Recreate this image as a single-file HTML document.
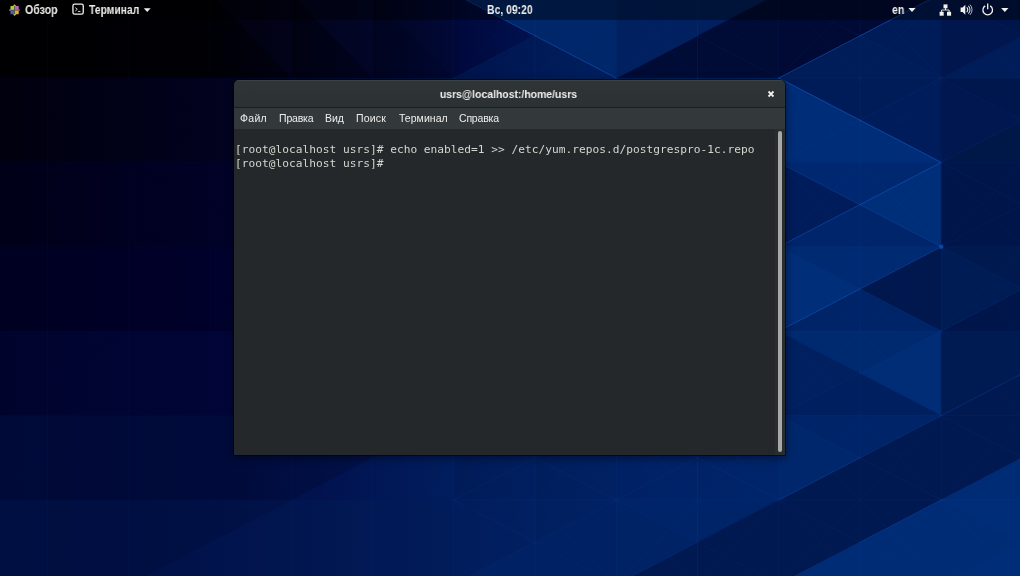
<!DOCTYPE html>
<html lang="ru">
<head>
<meta charset="utf-8">
<title>usrs@localhost:/home/usrs</title>
<style>
html,body{margin:0;padding:0;}
body{width:1020px;height:576px;overflow:hidden;background:#000a35;position:relative;font-family:"Liberation Sans","DejaVu Sans",sans-serif;}
.wall{position:absolute;left:0;top:0;display:block;}
.topbar{position:absolute;left:0;top:0;width:1020px;height:20px;background:rgba(0,0,0,0.4);color:#ececea;font-size:12px;font-weight:bold;line-height:20px;}
.topbar span{position:absolute;top:-0.3px;white-space:nowrap;will-change:transform;transform-origin:0 50%;}
.topbar svg{position:absolute;left:0;top:0;}
.win{position:absolute;left:233.5px;top:79.8px;width:551.3px;height:374.8px;border-radius:5px 5px 0 0;background:#24282a;box-shadow:0 0 0 1px rgba(0,0,0,0.5),0 2px 8px 1px rgba(0,0,0,0.45);overflow:hidden;}
.hdr{position:absolute;left:0;top:0;width:100%;height:27px;background:linear-gradient(#2f3537,#2c3133);border-bottom:1px solid #1a1d1e;box-shadow:inset 0 1px rgba(255,255,255,0.06);}
.title{position:absolute;left:-0.4px;width:551px;top:0.7px;height:27px;line-height:27px;text-align:center;color:#eeeeec;font-weight:bold;font-size:11.7px;white-space:nowrap;will-change:transform;transform:scaleX(0.893);}
.close{position:absolute;left:532px;top:9px;}
.menubar{position:absolute;left:0;top:28px;width:100%;height:21px;background:#33393b;color:#eeeeec;font-size:10.5px;line-height:21px;}
.menubar span{position:absolute;top:0.4px;white-space:nowrap;will-change:transform;}
.term{position:absolute;left:0;top:49px;width:542px;height:326px;background:#24282a;color:#d3d7cf;letter-spacing:0.01px;font-family:"DejaVu Sans Mono","Liberation Mono",monospace;font-size:11.2px;line-height:13px;white-space:pre;}
.term div{position:absolute;left:1px;will-change:transform;}
.sb{position:absolute;left:541.5px;top:49px;width:9.5px;height:326px;background:#292d2f;box-sizing:border-box;}
.thumb{position:absolute;left:544px;top:51px;width:4px;height:321px;border-radius:2px;background:#a7a9a8;}
</style>
</head>
<body>
<svg class="wall" width="1020" height="576" viewBox="0 0 1020 576"><defs><linearGradient id="r0" gradientUnits="userSpaceOnUse" x1="0" y1="0" x2="1020" y2="0"><stop offset="0.0000" stop-color="#000002"/><stop offset="0.2059" stop-color="#000006"/><stop offset="0.3647" stop-color="#00041e"/><stop offset="0.4461" stop-color="#000832"/><stop offset="0.6078" stop-color="#002468"/><stop offset="1.0000" stop-color="#00184f"/></linearGradient><linearGradient id="r1" gradientUnits="userSpaceOnUse" x1="0" y1="0" x2="1020" y2="0"><stop offset="0.0000" stop-color="#00000e"/><stop offset="0.2059" stop-color="#02021e"/><stop offset="0.7696" stop-color="#002d78"/><stop offset="1.0000" stop-color="#001a55"/></linearGradient><linearGradient id="r2" gradientUnits="userSpaceOnUse" x1="0" y1="0" x2="1020" y2="0"><stop offset="0.0000" stop-color="#000018"/><stop offset="0.2059" stop-color="#010126"/><stop offset="0.7696" stop-color="#002a72"/><stop offset="1.0000" stop-color="#00164a"/></linearGradient><linearGradient id="r3" gradientUnits="userSpaceOnUse" x1="0" y1="0" x2="1020" y2="0"><stop offset="0.0000" stop-color="#000022"/><stop offset="0.2059" stop-color="#00012b"/><stop offset="0.7696" stop-color="#002a72"/><stop offset="1.0000" stop-color="#001c58"/></linearGradient><linearGradient id="r4" gradientUnits="userSpaceOnUse" x1="0" y1="0" x2="1020" y2="0"><stop offset="0.0000" stop-color="#00042d"/><stop offset="0.2059" stop-color="#000536"/><stop offset="0.7696" stop-color="#002468"/><stop offset="1.0000" stop-color="#00174d"/></linearGradient><linearGradient id="r5" gradientUnits="userSpaceOnUse" x1="0" y1="0" x2="1020" y2="0"><stop offset="0.0000" stop-color="#000a38"/><stop offset="0.2255" stop-color="#000c3e"/><stop offset="0.3235" stop-color="#001048"/><stop offset="0.4118" stop-color="#001852"/><stop offset="0.5245" stop-color="#001e5c"/><stop offset="0.6373" stop-color="#002266"/><stop offset="0.7696" stop-color="#00256a"/><stop offset="1.0000" stop-color="#001850"/></linearGradient><linearGradient id="r6" gradientUnits="userSpaceOnUse" x1="0" y1="0" x2="1020" y2="0"><stop offset="0.0000" stop-color="#000f42"/><stop offset="0.1471" stop-color="#001046"/><stop offset="0.2941" stop-color="#00154d"/><stop offset="0.4118" stop-color="#001a55"/><stop offset="0.5245" stop-color="#001f5e"/><stop offset="0.6373" stop-color="#002367"/><stop offset="0.7647" stop-color="#00256a"/><stop offset="1.0000" stop-color="#002a72"/></linearGradient><linearGradient id="g1" gradientUnits="userSpaceOnUse" x1="454" y1="0" x2="600" y2="0"><stop offset="0" stop-color="#00134c"/><stop offset="1" stop-color="#001f5e"/></linearGradient><linearGradient id="g2" gradientUnits="userSpaceOnUse" x1="454" y1="0" x2="535" y2="0"><stop offset="0" stop-color="#00083a"/><stop offset="1" stop-color="#001250"/></linearGradient></defs><rect x="0" y="-6.40" width="1020" height="84.90" fill="url(#r0)"/><rect x="0" y="78.00" width="1020" height="84.90" fill="url(#r1)"/><rect x="0" y="162.40" width="1020" height="84.90" fill="url(#r2)"/><rect x="0" y="246.80" width="1020" height="84.90" fill="url(#r3)"/><rect x="0" y="331.20" width="1020" height="84.90" fill="url(#r4)"/><rect x="0" y="415.60" width="1020" height="84.90" fill="url(#r5)"/><rect x="0" y="500.00" width="1020" height="84.90" fill="url(#r6)"/><polygon points="210.0,-6.4 291.25,-6.4 291.25,78.0" fill="#1a2a9a" fill-opacity="0.06"/><polygon points="291.25,-6.4 372.5,-6.4 372.5,78.0" fill="#1a2a9a" fill-opacity="0.08"/><polygon points="372.5,-6.4 453.75,-6.4 453.75,78.0" fill="#1a2a9a" fill-opacity="0.04"/><polygon points="128.75,584.4 453.75,415.6 535.0,415.6 535.0,584.4" fill="#2a6aff" fill-opacity="0.02"/><polygon points="47.5,415.6 453.75,415.6 128.75,584.4 47.5,584.4" fill="#000010" fill-opacity="0.06"/><polygon points="291.25,500.0 453.75,415.6 453.75,500.0" fill="#2a6aff" fill-opacity="0.03"/><polygon points="453.75,-6.4 616.25,-6.4 535.0,35.8" fill="#00276a" stroke="#00276a" stroke-width="0.6"/><polygon points="616.25,-6.4 616.25,78.0 535.0,35.8" fill="#00276a" stroke="#00276a" stroke-width="0.6"/><polygon points="616.25,78.0 453.75,78.0 535.0,35.8" fill="url(#g1)" /><polygon points="453.75,78.0 453.75,-6.4 535.0,35.8" fill="url(#g2)" /><polygon points="616.25,-6.4 778.75,-6.4 697.5,35.8" fill="#002060" stroke="#002060" stroke-width="0.6"/><polygon points="778.75,-6.4 778.75,78.0 697.5,35.8" fill="#000c36" stroke="#000c36" stroke-width="0.6"/><polygon points="778.75,78.0 616.25,78.0 697.5,35.8" fill="#000c36" stroke="#000c36" stroke-width="0.6"/><polygon points="616.25,78.0 616.25,-6.4 697.5,35.8" fill="#002060" stroke="#002060" stroke-width="0.6"/><polygon points="778.75,-6.4 941.25,-6.4 860.0,35.8" fill="#000a35" stroke="#000a35" stroke-width="0.6"/><polygon points="941.25,-6.4 941.25,78.0 860.0,35.8" fill="#001c58" stroke="#001c58" stroke-width="0.6"/><polygon points="941.25,78.0 778.75,78.0 860.0,35.8" fill="#001d5a" stroke="#001d5a" stroke-width="0.6"/><polygon points="778.75,78.0 778.75,-6.4 860.0,35.8" fill="#000a35" stroke="#000a35" stroke-width="0.6"/><polygon points="941.25,-6.4 1103.75,-6.4 1022.5,35.8" fill="#00154a" stroke="#00154a" stroke-width="0.6"/><polygon points="1103.75,-6.4 1103.75,78.0 1022.5,35.8" fill="#00154a" stroke="#00154a" stroke-width="0.6"/><polygon points="1103.75,78.0 941.25,78.0 1022.5,35.8" fill="#001d5a" stroke="#001d5a" stroke-width="0.6"/><polygon points="941.25,78.0 941.25,-6.4 1022.5,35.8" fill="#00164c" stroke="#00164c" stroke-width="0.6"/><polygon points="778.75,78.0 941.25,78.0 860.0,120.2" fill="#001c58" stroke="#001c58" stroke-width="0.6"/><polygon points="941.25,78.0 941.25,162.4 860.0,120.2" fill="#001c5a" stroke="#001c5a" stroke-width="0.6"/><polygon points="941.25,162.4 778.75,162.4 860.0,120.2" fill="#002d78" stroke="#002d78" stroke-width="0.6"/><polygon points="778.75,162.4 778.75,78.0 860.0,120.2" fill="#002d78" stroke="#002d78" stroke-width="0.6"/><polygon points="941.25,78.0 1103.75,78.0 1022.5,120.2" fill="#00174e" stroke="#00174e" stroke-width="0.6"/><polygon points="1103.75,78.0 1103.75,162.4 1022.5,120.2" fill="#001848" stroke="#001848" stroke-width="0.6"/><polygon points="1103.75,162.4 941.25,162.4 1022.5,120.2" fill="#001848" stroke="#001848" stroke-width="0.6"/><polygon points="941.25,162.4 941.25,78.0 1022.5,120.2" fill="#00184f" stroke="#00184f" stroke-width="0.6"/><polygon points="778.75,162.4 941.25,162.4 860.0,204.6" fill="#002870" stroke="#002870" stroke-width="0.6"/><polygon points="941.25,162.4 941.25,246.8 860.0,204.6" fill="#002f7a" stroke="#002f7a" stroke-width="0.6"/><polygon points="941.25,246.8 778.75,246.8 860.0,204.6" fill="#00256a" stroke="#00256a" stroke-width="0.6"/><polygon points="778.75,246.8 778.75,162.4 860.0,204.6" fill="#001c5a" stroke="#001c5a" stroke-width="0.6"/><polygon points="941.25,162.4 1103.75,162.4 1022.5,204.6" fill="#00164a" stroke="#00164a" stroke-width="0.6"/><polygon points="1103.75,162.4 1103.75,246.8 1022.5,204.6" fill="#00164a" stroke="#00164a" stroke-width="0.6"/><polygon points="1103.75,246.8 941.25,246.8 1022.5,204.6" fill="#00164a" stroke="#00164a" stroke-width="0.6"/><polygon points="941.25,246.8 941.25,162.4 1022.5,204.6" fill="#00164a" stroke="#00164a" stroke-width="0.6"/><polygon points="778.75,246.8 941.25,246.8 860.0,289.0" fill="#002a72" stroke="#002a72" stroke-width="0.6"/><polygon points="941.25,246.8 941.25,331.2 860.0,289.0" fill="#00184e" stroke="#00184e" stroke-width="0.6"/><polygon points="941.25,331.2 778.75,331.2 860.0,289.0" fill="#002468" stroke="#002468" stroke-width="0.6"/><polygon points="778.75,331.2 778.75,246.8 860.0,289.0" fill="#002e78" stroke="#002e78" stroke-width="0.6"/><polygon points="941.25,246.8 1103.75,246.8 1022.5,289.0" fill="#001a50" stroke="#001a50" stroke-width="0.6"/><polygon points="1103.75,246.8 1103.75,331.2 1022.5,289.0" fill="#00164a" stroke="#00164a" stroke-width="0.6"/><polygon points="1103.75,331.2 941.25,331.2 1022.5,289.0" fill="#00164a" stroke="#00164a" stroke-width="0.6"/><polygon points="941.25,331.2 941.25,246.8 1022.5,289.0" fill="#001c55" stroke="#001c55" stroke-width="0.6"/><polygon points="778.75,331.2 941.25,331.2 860.0,373.4" fill="#002a70" stroke="#002a70" stroke-width="0.6"/><polygon points="941.25,331.2 941.25,415.6 860.0,373.4" fill="#002d76" stroke="#002d76" stroke-width="0.6"/><polygon points="941.25,415.6 778.75,415.6 860.0,373.4" fill="#001f5e" stroke="#001f5e" stroke-width="0.6"/><polygon points="778.75,415.6 778.75,331.2 860.0,373.4" fill="#002060" stroke="#002060" stroke-width="0.6"/><polygon points="941.25,331.2 1103.75,331.2 1022.5,373.4" fill="#001a52" stroke="#001a52" stroke-width="0.6"/><polygon points="1103.75,331.2 1103.75,415.6 1022.5,373.4" fill="#001950" stroke="#001950" stroke-width="0.6"/><polygon points="1103.75,415.6 941.25,415.6 1022.5,373.4" fill="#001950" stroke="#001950" stroke-width="0.6"/><polygon points="941.25,415.6 941.25,331.2 1022.5,373.4" fill="#001a52" stroke="#001a52" stroke-width="0.6"/><polygon points="778.75,415.6 941.25,415.6 860.0,457.8" fill="#002468" stroke="#002468" stroke-width="0.6"/><polygon points="941.25,415.6 941.25,500.0 860.0,457.8" fill="#001950" stroke="#001950" stroke-width="0.6"/><polygon points="941.25,500.0 778.75,500.0 860.0,457.8" fill="#001950" stroke="#001950" stroke-width="0.6"/><polygon points="778.75,500.0 778.75,415.6 860.0,457.8" fill="#00276c" stroke="#00276c" stroke-width="0.6"/><polygon points="941.25,415.6 1103.75,415.6 1022.5,457.8" fill="#001950" stroke="#001950" stroke-width="0.6"/><polygon points="1103.75,415.6 1103.75,500.0 1022.5,457.8" fill="#002b75" stroke="#002b75" stroke-width="0.6"/><polygon points="1103.75,500.0 941.25,500.0 1022.5,457.8" fill="#002b75" stroke="#002b75" stroke-width="0.6"/><polygon points="941.25,500.0 941.25,415.6 1022.5,457.8" fill="#001950" stroke="#001950" stroke-width="0.6"/><polygon points="616.25,500.0 616.25,584.4 535.0,542.2" fill="#002264" stroke="#002264" stroke-width="0.6"/><polygon points="616.25,584.4 453.75,584.4 535.0,542.2" fill="#002163" stroke="#002163" stroke-width="0.6"/><polygon points="616.25,500.0 778.75,500.0 697.5,542.2" fill="#002468" stroke="#002468" stroke-width="0.6"/><polygon points="778.75,500.0 778.75,584.4 697.5,542.2" fill="#001950" stroke="#001950" stroke-width="0.6"/><polygon points="778.75,584.4 616.25,584.4 697.5,542.2" fill="#001950" stroke="#001950" stroke-width="0.6"/><polygon points="616.25,584.4 616.25,500.0 697.5,542.2" fill="#002366" stroke="#002366" stroke-width="0.6"/><polygon points="778.75,500.0 941.25,500.0 860.0,542.2" fill="#001950" stroke="#001950" stroke-width="0.6"/><polygon points="941.25,500.0 941.25,584.4 860.0,542.2" fill="#002b75" stroke="#002b75" stroke-width="0.6"/><polygon points="941.25,584.4 778.75,584.4 860.0,542.2" fill="#002b75" stroke="#002b75" stroke-width="0.6"/><polygon points="778.75,584.4 778.75,500.0 860.0,542.2" fill="#001950" stroke="#001950" stroke-width="0.6"/><polygon points="941.25,500.0 1103.75,500.0 1022.5,542.2" fill="#002d78" stroke="#002d78" stroke-width="0.6"/><polygon points="1103.75,500.0 1103.75,584.4 1022.5,542.2" fill="#002f7a" stroke="#002f7a" stroke-width="0.6"/><polygon points="1103.75,584.4 941.25,584.4 1022.5,542.2" fill="#002d78" stroke="#002d78" stroke-width="0.6"/><polygon points="941.25,584.4 941.25,500.0 1022.5,542.2" fill="#002b75" stroke="#002b75" stroke-width="0.6"/><line x1="-33.75" y1="-6.4" x2="-33.75" y2="584.4" stroke="#2a6fe0" stroke-width="0.8" stroke-opacity="0.05"/><line x1="47.5" y1="-6.4" x2="47.5" y2="584.4" stroke="#2a6fe0" stroke-width="0.8" stroke-opacity="0.05"/><line x1="128.75" y1="-6.4" x2="128.75" y2="584.4" stroke="#2a6fe0" stroke-width="0.8" stroke-opacity="0.05"/><line x1="210.0" y1="-6.4" x2="210.0" y2="584.4" stroke="#2a6fe0" stroke-width="0.8" stroke-opacity="0.05"/><line x1="291.25" y1="-6.4" x2="291.25" y2="584.4" stroke="#2a6fe0" stroke-width="0.8" stroke-opacity="0.05"/><line x1="372.5" y1="-6.4" x2="372.5" y2="584.4" stroke="#2a6fe0" stroke-width="0.8" stroke-opacity="0.05"/><line x1="453.75" y1="-6.4" x2="453.75" y2="584.4" stroke="#2a6fe0" stroke-width="0.8" stroke-opacity="0.1"/><line x1="535.0" y1="-6.4" x2="535.0" y2="584.4" stroke="#2a6fe0" stroke-width="0.8" stroke-opacity="0.1"/><line x1="616.25" y1="-6.4" x2="616.25" y2="584.4" stroke="#2a6fe0" stroke-width="0.8" stroke-opacity="0.1"/><line x1="697.5" y1="-6.4" x2="697.5" y2="584.4" stroke="#2a6fe0" stroke-width="0.8" stroke-opacity="0.1"/><line x1="778.75" y1="-6.4" x2="778.75" y2="584.4" stroke="#2a6fe0" stroke-width="0.8" stroke-opacity="0.1"/><line x1="860.0" y1="-6.4" x2="860.0" y2="584.4" stroke="#2a6fe0" stroke-width="0.8" stroke-opacity="0.1"/><line x1="941.25" y1="-6.4" x2="941.25" y2="584.4" stroke="#2a6fe0" stroke-width="0.8" stroke-opacity="0.1"/><line x1="1022.5" y1="-6.4" x2="1022.5" y2="584.4" stroke="#2a6fe0" stroke-width="0.8" stroke-opacity="0.1"/><line x1="0" y1="78.00" x2="450" y2="78.00" stroke="#2a6fe0" stroke-width="0.8" stroke-opacity="0.04"/><line x1="450" y1="78.00" x2="1020" y2="78.00" stroke="#2a6fe0" stroke-width="0.8" stroke-opacity="0.09"/><line x1="0" y1="162.40" x2="450" y2="162.40" stroke="#2a6fe0" stroke-width="0.8" stroke-opacity="0.04"/><line x1="450" y1="162.40" x2="1020" y2="162.40" stroke="#2a6fe0" stroke-width="0.8" stroke-opacity="0.09"/><line x1="0" y1="246.80" x2="450" y2="246.80" stroke="#2a6fe0" stroke-width="0.8" stroke-opacity="0.04"/><line x1="450" y1="246.80" x2="1020" y2="246.80" stroke="#2a6fe0" stroke-width="0.8" stroke-opacity="0.09"/><line x1="0" y1="331.20" x2="450" y2="331.20" stroke="#2a6fe0" stroke-width="0.8" stroke-opacity="0.04"/><line x1="450" y1="331.20" x2="1020" y2="331.20" stroke="#2a6fe0" stroke-width="0.8" stroke-opacity="0.09"/><line x1="0" y1="415.60" x2="450" y2="415.60" stroke="#2a6fe0" stroke-width="0.8" stroke-opacity="0.04"/><line x1="450" y1="415.60" x2="1020" y2="415.60" stroke="#2a6fe0" stroke-width="0.8" stroke-opacity="0.09"/><line x1="0" y1="500.00" x2="450" y2="500.00" stroke="#2a6fe0" stroke-width="0.8" stroke-opacity="0.04"/><line x1="450" y1="500.00" x2="1020" y2="500.00" stroke="#2a6fe0" stroke-width="0.8" stroke-opacity="0.09"/><line x1="-33.75" y1="-6.4" x2="128.75" y2="78.0" stroke="#2a6fe0" stroke-width="0.8" stroke-opacity="0.02"/><line x1="128.75" y1="-6.4" x2="-33.75" y2="78.0" stroke="#2a6fe0" stroke-width="0.8" stroke-opacity="0.02"/><line x1="-33.75" y1="78.0" x2="128.75" y2="162.4" stroke="#2a6fe0" stroke-width="0.8" stroke-opacity="0.02"/><line x1="128.75" y1="78.0" x2="-33.75" y2="162.4" stroke="#2a6fe0" stroke-width="0.8" stroke-opacity="0.02"/><line x1="-33.75" y1="162.4" x2="128.75" y2="246.8" stroke="#2a6fe0" stroke-width="0.8" stroke-opacity="0.02"/><line x1="128.75" y1="162.4" x2="-33.75" y2="246.8" stroke="#2a6fe0" stroke-width="0.8" stroke-opacity="0.02"/><line x1="-33.75" y1="246.8" x2="128.75" y2="331.2" stroke="#2a6fe0" stroke-width="0.8" stroke-opacity="0.02"/><line x1="128.75" y1="246.8" x2="-33.75" y2="331.2" stroke="#2a6fe0" stroke-width="0.8" stroke-opacity="0.02"/><line x1="-33.75" y1="331.2" x2="128.75" y2="415.6" stroke="#2a6fe0" stroke-width="0.8" stroke-opacity="0.02"/><line x1="128.75" y1="331.2" x2="-33.75" y2="415.6" stroke="#2a6fe0" stroke-width="0.8" stroke-opacity="0.02"/><line x1="-33.75" y1="415.6" x2="128.75" y2="500.0" stroke="#2a6fe0" stroke-width="0.8" stroke-opacity="0.02"/><line x1="128.75" y1="415.6" x2="-33.75" y2="500.0" stroke="#2a6fe0" stroke-width="0.8" stroke-opacity="0.02"/><line x1="-33.75" y1="500.0" x2="128.75" y2="584.4" stroke="#2a6fe0" stroke-width="0.8" stroke-opacity="0.02"/><line x1="128.75" y1="500.0" x2="-33.75" y2="584.4" stroke="#2a6fe0" stroke-width="0.8" stroke-opacity="0.02"/><line x1="128.75" y1="-6.4" x2="291.25" y2="78.0" stroke="#2a6fe0" stroke-width="0.8" stroke-opacity="0.02"/><line x1="291.25" y1="-6.4" x2="128.75" y2="78.0" stroke="#2a6fe0" stroke-width="0.8" stroke-opacity="0.02"/><line x1="128.75" y1="78.0" x2="291.25" y2="162.4" stroke="#2a6fe0" stroke-width="0.8" stroke-opacity="0.02"/><line x1="291.25" y1="78.0" x2="128.75" y2="162.4" stroke="#2a6fe0" stroke-width="0.8" stroke-opacity="0.02"/><line x1="128.75" y1="162.4" x2="291.25" y2="246.8" stroke="#2a6fe0" stroke-width="0.8" stroke-opacity="0.02"/><line x1="291.25" y1="162.4" x2="128.75" y2="246.8" stroke="#2a6fe0" stroke-width="0.8" stroke-opacity="0.02"/><line x1="128.75" y1="246.8" x2="291.25" y2="331.2" stroke="#2a6fe0" stroke-width="0.8" stroke-opacity="0.02"/><line x1="291.25" y1="246.8" x2="128.75" y2="331.2" stroke="#2a6fe0" stroke-width="0.8" stroke-opacity="0.02"/><line x1="128.75" y1="331.2" x2="291.25" y2="415.6" stroke="#2a6fe0" stroke-width="0.8" stroke-opacity="0.02"/><line x1="291.25" y1="331.2" x2="128.75" y2="415.6" stroke="#2a6fe0" stroke-width="0.8" stroke-opacity="0.02"/><line x1="128.75" y1="415.6" x2="291.25" y2="500.0" stroke="#2a6fe0" stroke-width="0.8" stroke-opacity="0.02"/><line x1="291.25" y1="415.6" x2="128.75" y2="500.0" stroke="#2a6fe0" stroke-width="0.8" stroke-opacity="0.02"/><line x1="128.75" y1="500.0" x2="291.25" y2="584.4" stroke="#2a6fe0" stroke-width="0.8" stroke-opacity="0.02"/><line x1="291.25" y1="500.0" x2="128.75" y2="584.4" stroke="#2a6fe0" stroke-width="0.8" stroke-opacity="0.02"/><line x1="291.25" y1="-6.4" x2="453.75" y2="78.0" stroke="#2a6fe0" stroke-width="0.8" stroke-opacity="0.04"/><line x1="453.75" y1="-6.4" x2="291.25" y2="78.0" stroke="#2a6fe0" stroke-width="0.8" stroke-opacity="0.04"/><line x1="291.25" y1="78.0" x2="453.75" y2="162.4" stroke="#2a6fe0" stroke-width="0.8" stroke-opacity="0.04"/><line x1="453.75" y1="78.0" x2="291.25" y2="162.4" stroke="#2a6fe0" stroke-width="0.8" stroke-opacity="0.04"/><line x1="291.25" y1="162.4" x2="453.75" y2="246.8" stroke="#2a6fe0" stroke-width="0.8" stroke-opacity="0.04"/><line x1="453.75" y1="162.4" x2="291.25" y2="246.8" stroke="#2a6fe0" stroke-width="0.8" stroke-opacity="0.04"/><line x1="291.25" y1="246.8" x2="453.75" y2="331.2" stroke="#2a6fe0" stroke-width="0.8" stroke-opacity="0.04"/><line x1="453.75" y1="246.8" x2="291.25" y2="331.2" stroke="#2a6fe0" stroke-width="0.8" stroke-opacity="0.04"/><line x1="291.25" y1="331.2" x2="453.75" y2="415.6" stroke="#2a6fe0" stroke-width="0.8" stroke-opacity="0.04"/><line x1="453.75" y1="331.2" x2="291.25" y2="415.6" stroke="#2a6fe0" stroke-width="0.8" stroke-opacity="0.04"/><line x1="291.25" y1="415.6" x2="453.75" y2="500.0" stroke="#2a6fe0" stroke-width="0.8" stroke-opacity="0.04"/><line x1="453.75" y1="415.6" x2="291.25" y2="500.0" stroke="#2a6fe0" stroke-width="0.8" stroke-opacity="0.04"/><line x1="291.25" y1="500.0" x2="453.75" y2="584.4" stroke="#2a6fe0" stroke-width="0.8" stroke-opacity="0.04"/><line x1="453.75" y1="500.0" x2="291.25" y2="584.4" stroke="#2a6fe0" stroke-width="0.8" stroke-opacity="0.04"/><line x1="453.75" y1="-6.4" x2="616.25" y2="78.0" stroke="#2a6fe0" stroke-width="0.8" stroke-opacity="0.1"/><line x1="616.25" y1="-6.4" x2="453.75" y2="78.0" stroke="#2a6fe0" stroke-width="0.8" stroke-opacity="0.1"/><line x1="453.75" y1="78.0" x2="616.25" y2="162.4" stroke="#2a6fe0" stroke-width="0.8" stroke-opacity="0.1"/><line x1="616.25" y1="78.0" x2="453.75" y2="162.4" stroke="#2a6fe0" stroke-width="0.8" stroke-opacity="0.1"/><line x1="453.75" y1="162.4" x2="616.25" y2="246.8" stroke="#2a6fe0" stroke-width="0.8" stroke-opacity="0.1"/><line x1="616.25" y1="162.4" x2="453.75" y2="246.8" stroke="#2a6fe0" stroke-width="0.8" stroke-opacity="0.1"/><line x1="453.75" y1="246.8" x2="616.25" y2="331.2" stroke="#2a6fe0" stroke-width="0.8" stroke-opacity="0.1"/><line x1="616.25" y1="246.8" x2="453.75" y2="331.2" stroke="#2a6fe0" stroke-width="0.8" stroke-opacity="0.1"/><line x1="453.75" y1="331.2" x2="616.25" y2="415.6" stroke="#2a6fe0" stroke-width="0.8" stroke-opacity="0.1"/><line x1="616.25" y1="331.2" x2="453.75" y2="415.6" stroke="#2a6fe0" stroke-width="0.8" stroke-opacity="0.1"/><line x1="453.75" y1="415.6" x2="616.25" y2="500.0" stroke="#2a6fe0" stroke-width="0.8" stroke-opacity="0.1"/><line x1="616.25" y1="415.6" x2="453.75" y2="500.0" stroke="#2a6fe0" stroke-width="0.8" stroke-opacity="0.1"/><line x1="453.75" y1="500.0" x2="616.25" y2="584.4" stroke="#2a6fe0" stroke-width="0.8" stroke-opacity="0.1"/><line x1="616.25" y1="500.0" x2="453.75" y2="584.4" stroke="#2a6fe0" stroke-width="0.8" stroke-opacity="0.1"/><line x1="616.25" y1="-6.4" x2="778.75" y2="78.0" stroke="#2a6fe0" stroke-width="0.8" stroke-opacity="0.1"/><line x1="778.75" y1="-6.4" x2="616.25" y2="78.0" stroke="#2a6fe0" stroke-width="0.8" stroke-opacity="0.1"/><line x1="616.25" y1="78.0" x2="778.75" y2="162.4" stroke="#2a6fe0" stroke-width="0.8" stroke-opacity="0.1"/><line x1="778.75" y1="78.0" x2="616.25" y2="162.4" stroke="#2a6fe0" stroke-width="0.8" stroke-opacity="0.1"/><line x1="616.25" y1="162.4" x2="778.75" y2="246.8" stroke="#2a6fe0" stroke-width="0.8" stroke-opacity="0.1"/><line x1="778.75" y1="162.4" x2="616.25" y2="246.8" stroke="#2a6fe0" stroke-width="0.8" stroke-opacity="0.1"/><line x1="616.25" y1="246.8" x2="778.75" y2="331.2" stroke="#2a6fe0" stroke-width="0.8" stroke-opacity="0.1"/><line x1="778.75" y1="246.8" x2="616.25" y2="331.2" stroke="#2a6fe0" stroke-width="0.8" stroke-opacity="0.1"/><line x1="616.25" y1="331.2" x2="778.75" y2="415.6" stroke="#2a6fe0" stroke-width="0.8" stroke-opacity="0.1"/><line x1="778.75" y1="331.2" x2="616.25" y2="415.6" stroke="#2a6fe0" stroke-width="0.8" stroke-opacity="0.1"/><line x1="616.25" y1="415.6" x2="778.75" y2="500.0" stroke="#2a6fe0" stroke-width="0.8" stroke-opacity="0.1"/><line x1="778.75" y1="415.6" x2="616.25" y2="500.0" stroke="#2a6fe0" stroke-width="0.8" stroke-opacity="0.1"/><line x1="616.25" y1="500.0" x2="778.75" y2="584.4" stroke="#2a6fe0" stroke-width="0.8" stroke-opacity="0.1"/><line x1="778.75" y1="500.0" x2="616.25" y2="584.4" stroke="#2a6fe0" stroke-width="0.8" stroke-opacity="0.1"/><line x1="778.75" y1="-6.4" x2="941.25" y2="78.0" stroke="#2a6fe0" stroke-width="0.8" stroke-opacity="0.1"/><line x1="941.25" y1="-6.4" x2="778.75" y2="78.0" stroke="#2a6fe0" stroke-width="0.8" stroke-opacity="0.1"/><line x1="778.75" y1="78.0" x2="941.25" y2="162.4" stroke="#2a6fe0" stroke-width="0.8" stroke-opacity="0.1"/><line x1="941.25" y1="78.0" x2="778.75" y2="162.4" stroke="#2a6fe0" stroke-width="0.8" stroke-opacity="0.1"/><line x1="778.75" y1="162.4" x2="941.25" y2="246.8" stroke="#2a6fe0" stroke-width="0.8" stroke-opacity="0.1"/><line x1="941.25" y1="162.4" x2="778.75" y2="246.8" stroke="#2a6fe0" stroke-width="0.8" stroke-opacity="0.1"/><line x1="778.75" y1="246.8" x2="941.25" y2="331.2" stroke="#2a6fe0" stroke-width="0.8" stroke-opacity="0.1"/><line x1="941.25" y1="246.8" x2="778.75" y2="331.2" stroke="#2a6fe0" stroke-width="0.8" stroke-opacity="0.1"/><line x1="778.75" y1="331.2" x2="941.25" y2="415.6" stroke="#2a6fe0" stroke-width="0.8" stroke-opacity="0.1"/><line x1="941.25" y1="331.2" x2="778.75" y2="415.6" stroke="#2a6fe0" stroke-width="0.8" stroke-opacity="0.1"/><line x1="778.75" y1="415.6" x2="941.25" y2="500.0" stroke="#2a6fe0" stroke-width="0.8" stroke-opacity="0.1"/><line x1="941.25" y1="415.6" x2="778.75" y2="500.0" stroke="#2a6fe0" stroke-width="0.8" stroke-opacity="0.1"/><line x1="778.75" y1="500.0" x2="941.25" y2="584.4" stroke="#2a6fe0" stroke-width="0.8" stroke-opacity="0.1"/><line x1="941.25" y1="500.0" x2="778.75" y2="584.4" stroke="#2a6fe0" stroke-width="0.8" stroke-opacity="0.1"/><line x1="941.25" y1="-6.4" x2="1103.75" y2="78.0" stroke="#2a6fe0" stroke-width="0.8" stroke-opacity="0.1"/><line x1="1103.75" y1="-6.4" x2="941.25" y2="78.0" stroke="#2a6fe0" stroke-width="0.8" stroke-opacity="0.1"/><line x1="941.25" y1="78.0" x2="1103.75" y2="162.4" stroke="#2a6fe0" stroke-width="0.8" stroke-opacity="0.1"/><line x1="1103.75" y1="78.0" x2="941.25" y2="162.4" stroke="#2a6fe0" stroke-width="0.8" stroke-opacity="0.1"/><line x1="941.25" y1="162.4" x2="1103.75" y2="246.8" stroke="#2a6fe0" stroke-width="0.8" stroke-opacity="0.1"/><line x1="1103.75" y1="162.4" x2="941.25" y2="246.8" stroke="#2a6fe0" stroke-width="0.8" stroke-opacity="0.1"/><line x1="941.25" y1="246.8" x2="1103.75" y2="331.2" stroke="#2a6fe0" stroke-width="0.8" stroke-opacity="0.1"/><line x1="1103.75" y1="246.8" x2="941.25" y2="331.2" stroke="#2a6fe0" stroke-width="0.8" stroke-opacity="0.1"/><line x1="941.25" y1="331.2" x2="1103.75" y2="415.6" stroke="#2a6fe0" stroke-width="0.8" stroke-opacity="0.1"/><line x1="1103.75" y1="331.2" x2="941.25" y2="415.6" stroke="#2a6fe0" stroke-width="0.8" stroke-opacity="0.1"/><line x1="941.25" y1="415.6" x2="1103.75" y2="500.0" stroke="#2a6fe0" stroke-width="0.8" stroke-opacity="0.1"/><line x1="1103.75" y1="415.6" x2="941.25" y2="500.0" stroke="#2a6fe0" stroke-width="0.8" stroke-opacity="0.1"/><line x1="941.25" y1="500.0" x2="1103.75" y2="584.4" stroke="#2a6fe0" stroke-width="0.8" stroke-opacity="0.1"/><line x1="1103.75" y1="500.0" x2="941.25" y2="584.4" stroke="#2a6fe0" stroke-width="0.8" stroke-opacity="0.1"/><line x1="453.75" y1="-6.4" x2="535.0" y2="78.0" stroke="#2a6fe0" stroke-width="0.7" stroke-opacity="0.07"/><line x1="535.0" y1="-6.4" x2="453.75" y2="78.0" stroke="#2a6fe0" stroke-width="0.7" stroke-opacity="0.07"/><line x1="453.75" y1="78.0" x2="535.0" y2="162.4" stroke="#2a6fe0" stroke-width="0.7" stroke-opacity="0.07"/><line x1="535.0" y1="78.0" x2="453.75" y2="162.4" stroke="#2a6fe0" stroke-width="0.7" stroke-opacity="0.07"/><line x1="453.75" y1="162.4" x2="535.0" y2="246.8" stroke="#2a6fe0" stroke-width="0.7" stroke-opacity="0.07"/><line x1="535.0" y1="162.4" x2="453.75" y2="246.8" stroke="#2a6fe0" stroke-width="0.7" stroke-opacity="0.07"/><line x1="453.75" y1="246.8" x2="535.0" y2="331.2" stroke="#2a6fe0" stroke-width="0.7" stroke-opacity="0.07"/><line x1="535.0" y1="246.8" x2="453.75" y2="331.2" stroke="#2a6fe0" stroke-width="0.7" stroke-opacity="0.07"/><line x1="453.75" y1="331.2" x2="535.0" y2="415.6" stroke="#2a6fe0" stroke-width="0.7" stroke-opacity="0.07"/><line x1="535.0" y1="331.2" x2="453.75" y2="415.6" stroke="#2a6fe0" stroke-width="0.7" stroke-opacity="0.07"/><line x1="453.75" y1="415.6" x2="535.0" y2="500.0" stroke="#2a6fe0" stroke-width="0.7" stroke-opacity="0.07"/><line x1="535.0" y1="415.6" x2="453.75" y2="500.0" stroke="#2a6fe0" stroke-width="0.7" stroke-opacity="0.07"/><line x1="453.75" y1="500.0" x2="535.0" y2="584.4" stroke="#2a6fe0" stroke-width="0.7" stroke-opacity="0.07"/><line x1="535.0" y1="500.0" x2="453.75" y2="584.4" stroke="#2a6fe0" stroke-width="0.7" stroke-opacity="0.07"/><line x1="535.0" y1="-6.4" x2="616.25" y2="78.0" stroke="#2a6fe0" stroke-width="0.7" stroke-opacity="0.07"/><line x1="616.25" y1="-6.4" x2="535.0" y2="78.0" stroke="#2a6fe0" stroke-width="0.7" stroke-opacity="0.07"/><line x1="535.0" y1="78.0" x2="616.25" y2="162.4" stroke="#2a6fe0" stroke-width="0.7" stroke-opacity="0.07"/><line x1="616.25" y1="78.0" x2="535.0" y2="162.4" stroke="#2a6fe0" stroke-width="0.7" stroke-opacity="0.07"/><line x1="535.0" y1="162.4" x2="616.25" y2="246.8" stroke="#2a6fe0" stroke-width="0.7" stroke-opacity="0.07"/><line x1="616.25" y1="162.4" x2="535.0" y2="246.8" stroke="#2a6fe0" stroke-width="0.7" stroke-opacity="0.07"/><line x1="535.0" y1="246.8" x2="616.25" y2="331.2" stroke="#2a6fe0" stroke-width="0.7" stroke-opacity="0.07"/><line x1="616.25" y1="246.8" x2="535.0" y2="331.2" stroke="#2a6fe0" stroke-width="0.7" stroke-opacity="0.07"/><line x1="535.0" y1="331.2" x2="616.25" y2="415.6" stroke="#2a6fe0" stroke-width="0.7" stroke-opacity="0.07"/><line x1="616.25" y1="331.2" x2="535.0" y2="415.6" stroke="#2a6fe0" stroke-width="0.7" stroke-opacity="0.07"/><line x1="535.0" y1="415.6" x2="616.25" y2="500.0" stroke="#2a6fe0" stroke-width="0.7" stroke-opacity="0.07"/><line x1="616.25" y1="415.6" x2="535.0" y2="500.0" stroke="#2a6fe0" stroke-width="0.7" stroke-opacity="0.07"/><line x1="535.0" y1="500.0" x2="616.25" y2="584.4" stroke="#2a6fe0" stroke-width="0.7" stroke-opacity="0.07"/><line x1="616.25" y1="500.0" x2="535.0" y2="584.4" stroke="#2a6fe0" stroke-width="0.7" stroke-opacity="0.07"/><line x1="616.25" y1="-6.4" x2="697.5" y2="78.0" stroke="#2a6fe0" stroke-width="0.7" stroke-opacity="0.07"/><line x1="697.5" y1="-6.4" x2="616.25" y2="78.0" stroke="#2a6fe0" stroke-width="0.7" stroke-opacity="0.07"/><line x1="616.25" y1="78.0" x2="697.5" y2="162.4" stroke="#2a6fe0" stroke-width="0.7" stroke-opacity="0.07"/><line x1="697.5" y1="78.0" x2="616.25" y2="162.4" stroke="#2a6fe0" stroke-width="0.7" stroke-opacity="0.07"/><line x1="616.25" y1="162.4" x2="697.5" y2="246.8" stroke="#2a6fe0" stroke-width="0.7" stroke-opacity="0.07"/><line x1="697.5" y1="162.4" x2="616.25" y2="246.8" stroke="#2a6fe0" stroke-width="0.7" stroke-opacity="0.07"/><line x1="616.25" y1="246.8" x2="697.5" y2="331.2" stroke="#2a6fe0" stroke-width="0.7" stroke-opacity="0.07"/><line x1="697.5" y1="246.8" x2="616.25" y2="331.2" stroke="#2a6fe0" stroke-width="0.7" stroke-opacity="0.07"/><line x1="616.25" y1="331.2" x2="697.5" y2="415.6" stroke="#2a6fe0" stroke-width="0.7" stroke-opacity="0.07"/><line x1="697.5" y1="331.2" x2="616.25" y2="415.6" stroke="#2a6fe0" stroke-width="0.7" stroke-opacity="0.07"/><line x1="616.25" y1="415.6" x2="697.5" y2="500.0" stroke="#2a6fe0" stroke-width="0.7" stroke-opacity="0.07"/><line x1="697.5" y1="415.6" x2="616.25" y2="500.0" stroke="#2a6fe0" stroke-width="0.7" stroke-opacity="0.07"/><line x1="616.25" y1="500.0" x2="697.5" y2="584.4" stroke="#2a6fe0" stroke-width="0.7" stroke-opacity="0.07"/><line x1="697.5" y1="500.0" x2="616.25" y2="584.4" stroke="#2a6fe0" stroke-width="0.7" stroke-opacity="0.07"/><line x1="697.5" y1="-6.4" x2="778.75" y2="78.0" stroke="#2a6fe0" stroke-width="0.7" stroke-opacity="0.07"/><line x1="778.75" y1="-6.4" x2="697.5" y2="78.0" stroke="#2a6fe0" stroke-width="0.7" stroke-opacity="0.07"/><line x1="697.5" y1="78.0" x2="778.75" y2="162.4" stroke="#2a6fe0" stroke-width="0.7" stroke-opacity="0.07"/><line x1="778.75" y1="78.0" x2="697.5" y2="162.4" stroke="#2a6fe0" stroke-width="0.7" stroke-opacity="0.07"/><line x1="697.5" y1="162.4" x2="778.75" y2="246.8" stroke="#2a6fe0" stroke-width="0.7" stroke-opacity="0.07"/><line x1="778.75" y1="162.4" x2="697.5" y2="246.8" stroke="#2a6fe0" stroke-width="0.7" stroke-opacity="0.07"/><line x1="697.5" y1="246.8" x2="778.75" y2="331.2" stroke="#2a6fe0" stroke-width="0.7" stroke-opacity="0.07"/><line x1="778.75" y1="246.8" x2="697.5" y2="331.2" stroke="#2a6fe0" stroke-width="0.7" stroke-opacity="0.07"/><line x1="697.5" y1="331.2" x2="778.75" y2="415.6" stroke="#2a6fe0" stroke-width="0.7" stroke-opacity="0.07"/><line x1="778.75" y1="331.2" x2="697.5" y2="415.6" stroke="#2a6fe0" stroke-width="0.7" stroke-opacity="0.07"/><line x1="697.5" y1="415.6" x2="778.75" y2="500.0" stroke="#2a6fe0" stroke-width="0.7" stroke-opacity="0.07"/><line x1="778.75" y1="415.6" x2="697.5" y2="500.0" stroke="#2a6fe0" stroke-width="0.7" stroke-opacity="0.07"/><line x1="697.5" y1="500.0" x2="778.75" y2="584.4" stroke="#2a6fe0" stroke-width="0.7" stroke-opacity="0.07"/><line x1="778.75" y1="500.0" x2="697.5" y2="584.4" stroke="#2a6fe0" stroke-width="0.7" stroke-opacity="0.07"/><line x1="778.75" y1="-6.4" x2="860.0" y2="78.0" stroke="#2a6fe0" stroke-width="0.7" stroke-opacity="0.07"/><line x1="860.0" y1="-6.4" x2="778.75" y2="78.0" stroke="#2a6fe0" stroke-width="0.7" stroke-opacity="0.07"/><line x1="778.75" y1="78.0" x2="860.0" y2="162.4" stroke="#2a6fe0" stroke-width="0.7" stroke-opacity="0.07"/><line x1="860.0" y1="78.0" x2="778.75" y2="162.4" stroke="#2a6fe0" stroke-width="0.7" stroke-opacity="0.07"/><line x1="778.75" y1="162.4" x2="860.0" y2="246.8" stroke="#2a6fe0" stroke-width="0.7" stroke-opacity="0.07"/><line x1="860.0" y1="162.4" x2="778.75" y2="246.8" stroke="#2a6fe0" stroke-width="0.7" stroke-opacity="0.07"/><line x1="778.75" y1="246.8" x2="860.0" y2="331.2" stroke="#2a6fe0" stroke-width="0.7" stroke-opacity="0.07"/><line x1="860.0" y1="246.8" x2="778.75" y2="331.2" stroke="#2a6fe0" stroke-width="0.7" stroke-opacity="0.07"/><line x1="778.75" y1="331.2" x2="860.0" y2="415.6" stroke="#2a6fe0" stroke-width="0.7" stroke-opacity="0.07"/><line x1="860.0" y1="331.2" x2="778.75" y2="415.6" stroke="#2a6fe0" stroke-width="0.7" stroke-opacity="0.07"/><line x1="778.75" y1="415.6" x2="860.0" y2="500.0" stroke="#2a6fe0" stroke-width="0.7" stroke-opacity="0.07"/><line x1="860.0" y1="415.6" x2="778.75" y2="500.0" stroke="#2a6fe0" stroke-width="0.7" stroke-opacity="0.07"/><line x1="778.75" y1="500.0" x2="860.0" y2="584.4" stroke="#2a6fe0" stroke-width="0.7" stroke-opacity="0.07"/><line x1="860.0" y1="500.0" x2="778.75" y2="584.4" stroke="#2a6fe0" stroke-width="0.7" stroke-opacity="0.07"/><line x1="860.0" y1="-6.4" x2="941.25" y2="78.0" stroke="#2a6fe0" stroke-width="0.7" stroke-opacity="0.07"/><line x1="941.25" y1="-6.4" x2="860.0" y2="78.0" stroke="#2a6fe0" stroke-width="0.7" stroke-opacity="0.07"/><line x1="860.0" y1="78.0" x2="941.25" y2="162.4" stroke="#2a6fe0" stroke-width="0.7" stroke-opacity="0.07"/><line x1="941.25" y1="78.0" x2="860.0" y2="162.4" stroke="#2a6fe0" stroke-width="0.7" stroke-opacity="0.07"/><line x1="860.0" y1="162.4" x2="941.25" y2="246.8" stroke="#2a6fe0" stroke-width="0.7" stroke-opacity="0.07"/><line x1="941.25" y1="162.4" x2="860.0" y2="246.8" stroke="#2a6fe0" stroke-width="0.7" stroke-opacity="0.07"/><line x1="860.0" y1="246.8" x2="941.25" y2="331.2" stroke="#2a6fe0" stroke-width="0.7" stroke-opacity="0.07"/><line x1="941.25" y1="246.8" x2="860.0" y2="331.2" stroke="#2a6fe0" stroke-width="0.7" stroke-opacity="0.07"/><line x1="860.0" y1="331.2" x2="941.25" y2="415.6" stroke="#2a6fe0" stroke-width="0.7" stroke-opacity="0.07"/><line x1="941.25" y1="331.2" x2="860.0" y2="415.6" stroke="#2a6fe0" stroke-width="0.7" stroke-opacity="0.07"/><line x1="860.0" y1="415.6" x2="941.25" y2="500.0" stroke="#2a6fe0" stroke-width="0.7" stroke-opacity="0.07"/><line x1="941.25" y1="415.6" x2="860.0" y2="500.0" stroke="#2a6fe0" stroke-width="0.7" stroke-opacity="0.07"/><line x1="860.0" y1="500.0" x2="941.25" y2="584.4" stroke="#2a6fe0" stroke-width="0.7" stroke-opacity="0.07"/><line x1="941.25" y1="500.0" x2="860.0" y2="584.4" stroke="#2a6fe0" stroke-width="0.7" stroke-opacity="0.07"/><line x1="941.25" y1="-6.4" x2="1022.5" y2="78.0" stroke="#2a6fe0" stroke-width="0.7" stroke-opacity="0.07"/><line x1="1022.5" y1="-6.4" x2="941.25" y2="78.0" stroke="#2a6fe0" stroke-width="0.7" stroke-opacity="0.07"/><line x1="941.25" y1="78.0" x2="1022.5" y2="162.4" stroke="#2a6fe0" stroke-width="0.7" stroke-opacity="0.07"/><line x1="1022.5" y1="78.0" x2="941.25" y2="162.4" stroke="#2a6fe0" stroke-width="0.7" stroke-opacity="0.07"/><line x1="941.25" y1="162.4" x2="1022.5" y2="246.8" stroke="#2a6fe0" stroke-width="0.7" stroke-opacity="0.07"/><line x1="1022.5" y1="162.4" x2="941.25" y2="246.8" stroke="#2a6fe0" stroke-width="0.7" stroke-opacity="0.07"/><line x1="941.25" y1="246.8" x2="1022.5" y2="331.2" stroke="#2a6fe0" stroke-width="0.7" stroke-opacity="0.07"/><line x1="1022.5" y1="246.8" x2="941.25" y2="331.2" stroke="#2a6fe0" stroke-width="0.7" stroke-opacity="0.07"/><line x1="941.25" y1="331.2" x2="1022.5" y2="415.6" stroke="#2a6fe0" stroke-width="0.7" stroke-opacity="0.07"/><line x1="1022.5" y1="331.2" x2="941.25" y2="415.6" stroke="#2a6fe0" stroke-width="0.7" stroke-opacity="0.07"/><line x1="941.25" y1="415.6" x2="1022.5" y2="500.0" stroke="#2a6fe0" stroke-width="0.7" stroke-opacity="0.07"/><line x1="1022.5" y1="415.6" x2="941.25" y2="500.0" stroke="#2a6fe0" stroke-width="0.7" stroke-opacity="0.07"/><line x1="941.25" y1="500.0" x2="1022.5" y2="584.4" stroke="#2a6fe0" stroke-width="0.7" stroke-opacity="0.07"/><line x1="1022.5" y1="500.0" x2="941.25" y2="584.4" stroke="#2a6fe0" stroke-width="0.7" stroke-opacity="0.07"/><line x1="1022.5" y1="-6.4" x2="1103.75" y2="78.0" stroke="#2a6fe0" stroke-width="0.7" stroke-opacity="0.07"/><line x1="1103.75" y1="-6.4" x2="1022.5" y2="78.0" stroke="#2a6fe0" stroke-width="0.7" stroke-opacity="0.07"/><line x1="1022.5" y1="78.0" x2="1103.75" y2="162.4" stroke="#2a6fe0" stroke-width="0.7" stroke-opacity="0.07"/><line x1="1103.75" y1="78.0" x2="1022.5" y2="162.4" stroke="#2a6fe0" stroke-width="0.7" stroke-opacity="0.07"/><line x1="1022.5" y1="162.4" x2="1103.75" y2="246.8" stroke="#2a6fe0" stroke-width="0.7" stroke-opacity="0.07"/><line x1="1103.75" y1="162.4" x2="1022.5" y2="246.8" stroke="#2a6fe0" stroke-width="0.7" stroke-opacity="0.07"/><line x1="1022.5" y1="246.8" x2="1103.75" y2="331.2" stroke="#2a6fe0" stroke-width="0.7" stroke-opacity="0.07"/><line x1="1103.75" y1="246.8" x2="1022.5" y2="331.2" stroke="#2a6fe0" stroke-width="0.7" stroke-opacity="0.07"/><line x1="1022.5" y1="331.2" x2="1103.75" y2="415.6" stroke="#2a6fe0" stroke-width="0.7" stroke-opacity="0.07"/><line x1="1103.75" y1="331.2" x2="1022.5" y2="415.6" stroke="#2a6fe0" stroke-width="0.7" stroke-opacity="0.07"/><line x1="1022.5" y1="415.6" x2="1103.75" y2="500.0" stroke="#2a6fe0" stroke-width="0.7" stroke-opacity="0.07"/><line x1="1103.75" y1="415.6" x2="1022.5" y2="500.0" stroke="#2a6fe0" stroke-width="0.7" stroke-opacity="0.07"/><line x1="1022.5" y1="500.0" x2="1103.75" y2="584.4" stroke="#2a6fe0" stroke-width="0.7" stroke-opacity="0.07"/><line x1="1103.75" y1="500.0" x2="1022.5" y2="584.4" stroke="#2a6fe0" stroke-width="0.7" stroke-opacity="0.07"/><line x1="453.75" y1="-6.4" x2="616.25" y2="78.0" stroke="#1c5fd0" stroke-width="1.0" stroke-opacity="0.45"/><line x1="778.75" y1="78.0" x2="941.25" y2="-6.4" stroke="#1c5fd0" stroke-width="1.0" stroke-opacity="0.5"/><line x1="778.75" y1="78.0" x2="941.25" y2="162.4" stroke="#1c5fd0" stroke-width="1.0" stroke-opacity="0.45"/><line x1="941.25" y1="162.4" x2="778.75" y2="246.8" stroke="#1c5fd0" stroke-width="1.0" stroke-opacity="0.4"/><line x1="941.25" y1="246.8" x2="778.75" y2="331.2" stroke="#1c5fd0" stroke-width="1.0" stroke-opacity="0.4"/><line x1="778.75" y1="162.4" x2="941.25" y2="246.8" stroke="#1c5fd0" stroke-width="1.0" stroke-opacity="0.25"/><line x1="778.75" y1="500.0" x2="1103.75" y2="331.2" stroke="#1c5fd0" stroke-width="1.0" stroke-opacity="0.2"/><line x1="778.75" y1="584.4" x2="1103.75" y2="415.6" stroke="#1c5fd0" stroke-width="1.0" stroke-opacity="0.2"/><circle cx="941.25" cy="246.8" r="2.2" fill="#1448b0" fill-opacity="0.8"/></svg>
<div class="topbar">
<svg width="1020" height="20" viewBox="0 0 1020 20">
<!-- CentOS-like logo -->
<g transform="translate(14.6,10.1)">
 <path d="M0 -5.9 L1.7 -4 H-1.7 Z" fill="#f0a82a"/>
 <path d="M5.6 0 L4 -1.7 V1.7 Z" fill="#6a68c0"/>
 <path d="M0 5.9 L1.7 4 H-1.7 Z" fill="#a4d43e"/>
 <path d="M-5.6 0 L-4 -1.7 V1.7 Z" fill="#c070bc"/>
 <rect x="-4.1" y="-4.1" width="3.8" height="3.8" fill="#a4d43e"/>
 <rect x="0.3" y="-4.1" width="3.8" height="3.8" fill="#b866b4"/>
 <rect x="-4.1" y="0.3" width="3.8" height="3.8" fill="#5a58b4"/>
 <rect x="0.3" y="0.3" width="3.8" height="3.8" fill="#f0a82a"/>
 <path d="M-0.3 -4.1 H0.3 V-0.3 H4.1 V0.3 H0.3 V4.1 H-0.3 V0.3 H-4.1 V-0.3 H-0.3 Z" fill="#e8d8e8" fill-opacity="0.35"/>
</g>
<!-- terminal app icon -->
<rect x="72.95" y="4.1" width="10.3" height="10" rx="1.7" fill="none" stroke="#f0f0ee" stroke-width="1.3"/>
<path d="M75.3 7.6 L77.3 9.3 L75.3 11 M77.9 11.4 H80.4" fill="none" stroke="#f0f0ee" stroke-width="0.9"/>
<!-- arrows -->
<path d="M143.8 8.2 H150.6 L147.2 12 Z" fill="#f0f0ee"/>
<path d="M908.4 8 H915.6 L912 11.9 Z" fill="#f0f0ee"/>
<path d="M1001.1 8 H1008.5 L1004.8 11.9 Z" fill="#f0f0ee"/>
<!-- network -->
<g fill="#f0f0ee">
<rect x="943.5" y="4.4" width="4" height="3.9"/>
<rect x="939.6" y="11.8" width="4.1" height="3.9"/>
<rect x="947" y="11.8" width="4.1" height="3.9"/>
</g>
<path d="M945.5 8 V10 M941.6 12 V10 H949.1 V12" fill="none" stroke="#f0f0ee" stroke-width="0.9"/>
<!-- speaker -->
<path d="M960.6 7.4 H962.6 L965.3 4.7 V14.7 L962.6 12 H960.6 Z" fill="#f0f0ee"/>
<path d="M966.7 7.3 A3.2 3.2 0 0 1 966.7 12.1" fill="none" stroke="#f0f0ee" stroke-width="1.1"/>
<path d="M968.3 5.8 A5.4 5.4 0 0 1 968.3 13.6" fill="none" stroke="#f0f0ee" stroke-width="1.1" stroke-opacity="0.9"/>
<path d="M970 4.6 A7.4 7.4 0 0 1 970 14.8" fill="none" stroke="#f0f0ee" stroke-width="1" stroke-opacity="0.75"/>
<!-- power -->
<path d="M985.2 5.9 A4.8 4.8 0 1 0 990.2 5.9" fill="none" stroke="#f0f0ee" stroke-width="1.3"/>
<path d="M987.7 3.6 V9.2" fill="none" stroke="#f0f0ee" stroke-width="1.3"/>
</svg>
<span style="left:25px;transform:scaleX(0.885)">Обзор</span>
<span style="left:88.5px;transform:scaleX(0.862)">Терминал</span>
<span style="left:487.1px;transform:scaleX(0.868)">Вс, 09:20</span>
<span style="left:891.5px;transform:scaleX(0.876)">en</span>
</div>
<div class="win">
<div class="hdr"></div>
<div class="title">usrs@localhost:/home/usrs</div>
<svg class="close" width="10" height="10" viewBox="0 0 10 10"><path d="M2.5 2.5 L7.5 7.5 M7.5 2.5 L2.5 7.5" stroke="#eeeeec" stroke-width="1.8" fill="none"/></svg>
<div class="menubar">
<span style="left:6.4px;letter-spacing:0.3px">Файл</span>
<span style="left:45.4px;letter-spacing:-0.17px">Правка</span>
<span style="left:91.2px;letter-spacing:-0.06px">Вид</span>
<span style="left:122.2px;letter-spacing:0.18px">Поиск</span>
<span style="left:165.3px;letter-spacing:0.04px">Терминал</span>
<span style="left:225.6px;letter-spacing:-0.2px">Справка</span>
</div>
<div class="term">
<div style="top:14.5px">[root@localhost usrs]# echo enabled=1 &gt;&gt; /etc/yum.repos.d/postgrespro-1c.repo</div>
<div style="top:28.4px">[root@localhost usrs]# </div>
</div>
<div class="sb"></div>
<div class="thumb"></div>
</div>
</body>
</html>
